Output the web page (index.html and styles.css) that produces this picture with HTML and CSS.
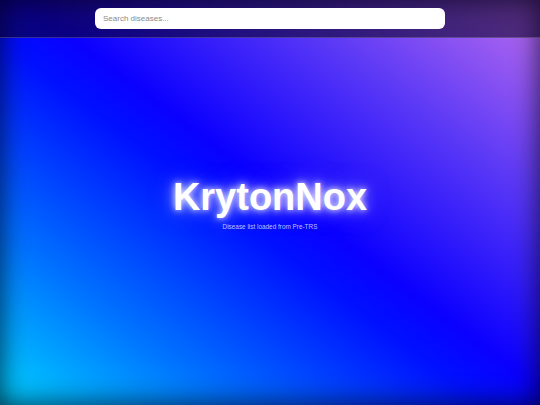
FILE: index.html
```html
<!DOCTYPE html>
<html lang="en">
<head>
<meta charset="utf-8">
<title>KrytonNox</title>
<link rel="stylesheet" href="styles.css">
</head>
<body>
<div class="app">
  <header class="topbar">
    <input class="search" type="text" placeholder="Search diseases...">
  </header>
  <main class="hero">
    <h1 class="title">KrytonNox</h1>
    <p class="subtitle">Disease list loaded from Pre-TRS</p>
  </main>
</div>
</body>
</html>
```
FILE: styles.css
```css
html, body {
  margin: 0;
  padding: 0;
  height: 100%;
}
body {
  font-family: "Liberation Sans", Arial, sans-serif;
  background: linear-gradient(to top right, #00d4ff 0%, #0070ff 22%, #0010ff 45%, #0a00ff 52%, #5a38f6 75%, #c070ee 100%);
  overflow: hidden;
}
.app {
  height: 100vh;
  display: grid;
  grid-template-rows: 38px 1fr;
  box-shadow: inset 0 0 28px rgba(0, 0, 20, 0.8);
}
.topbar {
  background: rgba(10, 0, 40, 0.58);
  border-bottom: 1px solid rgba(255, 255, 255, 0.18);
  display: flex;
  justify-content: center;
  align-items: center;
  box-sizing: border-box;
}
.search {
  width: 350px;
  height: 21px;
  box-sizing: border-box;
  border: none;
  border-radius: 6px;
  background: #fff;
  padding: 0 8px;
  font-family: "Liberation Sans", Arial, sans-serif;
  font-size: 8px;
  color: #333;
  outline: none;
}
.search::placeholder {
  color: #8a8a8a;
}
.hero {
  display: flex;
  flex-direction: column;
  align-items: center;
  justify-content: center;
  padding-bottom: 38px;
}
.title {
  margin: 0;
  font-size: 38px;
  font-weight: bold;
  color: #fff;
  line-height: 44px;
  text-shadow: 0 0 6px rgba(255, 255, 255, 0.9), 0 0 14px rgba(255, 255, 255, 0.6), 0 0 24px rgba(200, 200, 255, 0.5);
}
.subtitle {
  margin: 4px 0 0;
  font-size: 6.4px;
  color: rgba(220, 225, 255, 0.85);
}
```
